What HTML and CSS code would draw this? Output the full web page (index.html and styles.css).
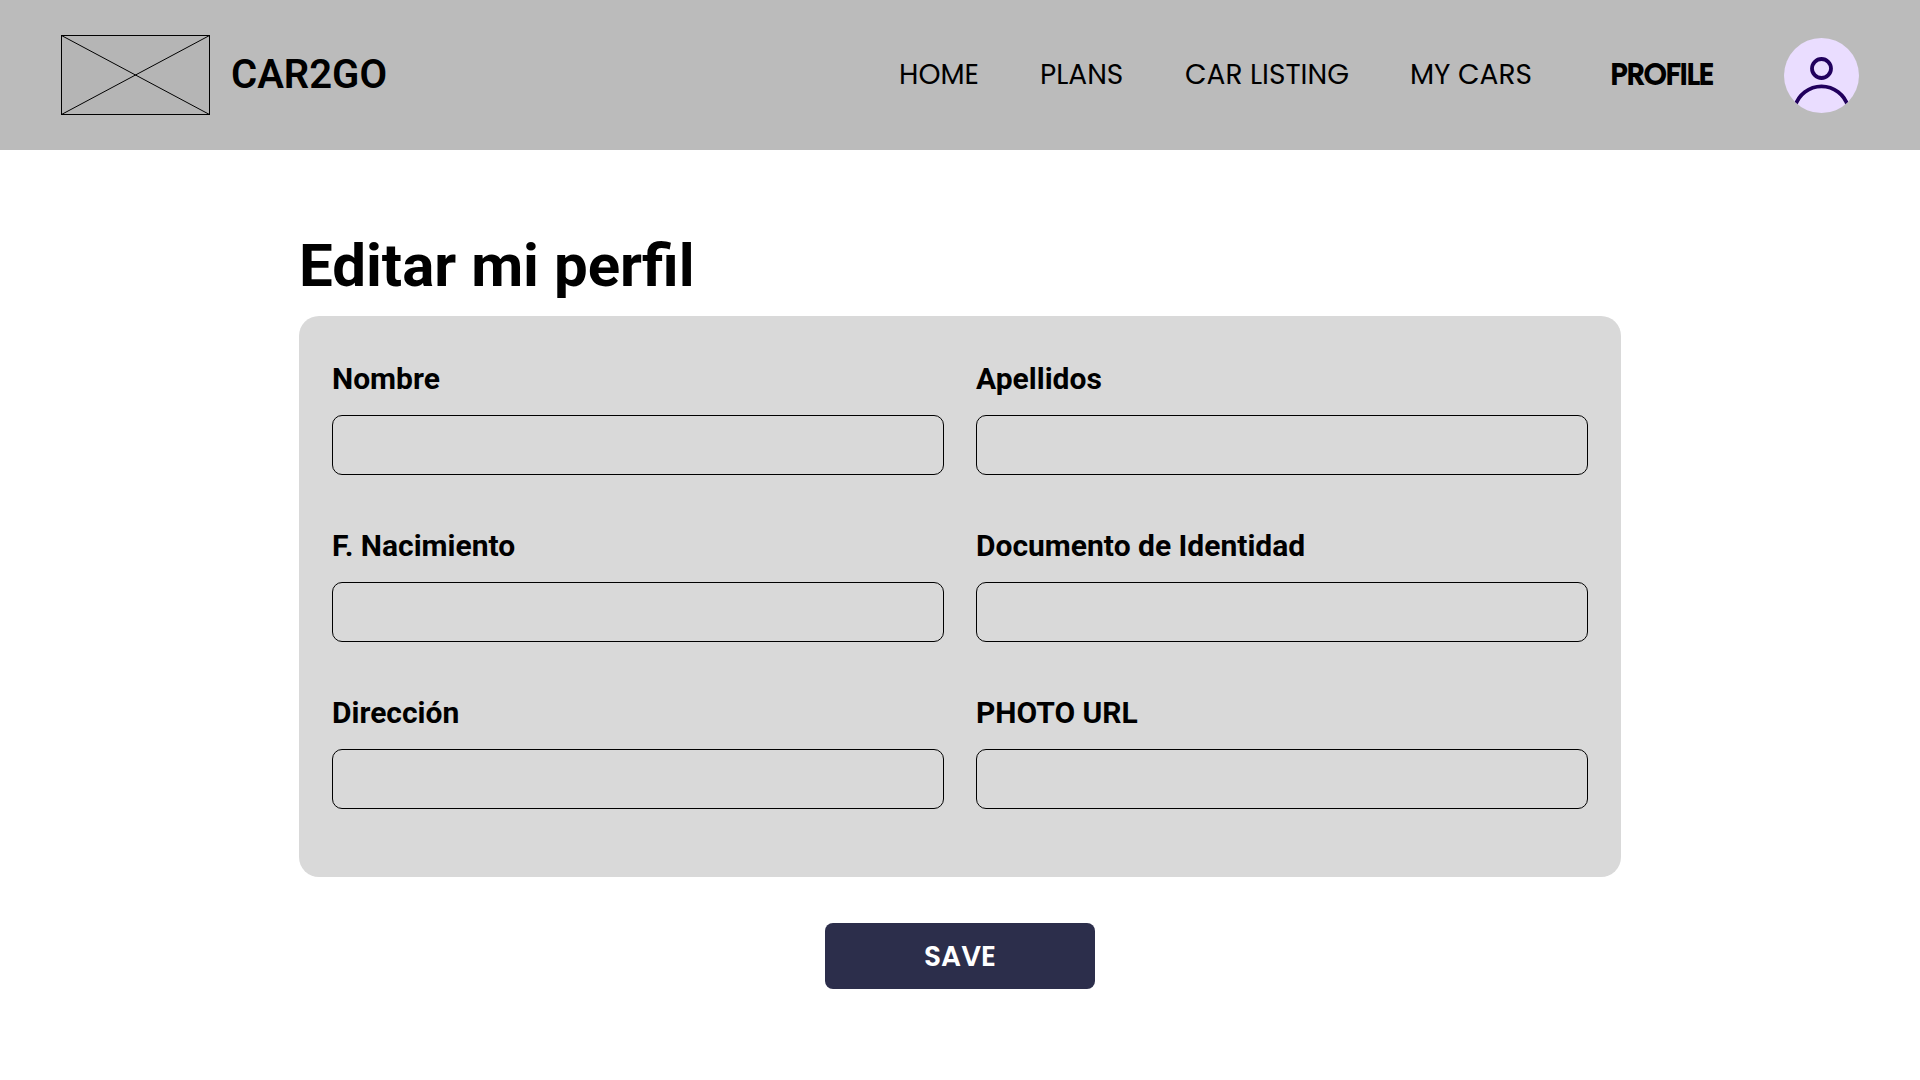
FILE: index.html
```html
<!DOCTYPE html>
<html lang="es">
<head>
  <meta charset="utf-8">
  <meta name="viewport" content="width=device-width, initial-scale=1">
  <title>CAR2GO - Editar mi perfil</title>
  <link rel="stylesheet" href="styles.css">
</head>
<body>
  <header class="site-header">
    <a class="brand" href="#">
      <svg class="brand-logo" viewBox="0 0 149 80" aria-hidden="true">
        <rect x="0.5" y="0.5" width="148" height="79" fill="#b5b5b5" stroke="#000"/>
        <path d="M0.5 0.5L148.500 79.500M148.500 0.5L0.5 79.500" stroke="#000" fill="none"/>
      </svg>
      <span class="brand-name">CAR2GO</span>
    </a>
    <nav class="site-nav">
      <a class="nav-link" href="#">HOME</a>
      <a class="nav-link" href="#">PLANS</a>
      <a class="nav-link" href="#">CAR LISTING</a>
      <a class="nav-link" href="#">MY CARS</a>
      <a class="nav-link nav-link-active" href="#" aria-current="page">PROFILE</a>
      <svg class="avatar" viewBox="0 0 75 75" role="img" aria-label="Avatar">
        <clipPath id="avatar-clip"><circle cx="37.5" cy="37.5" r="37.5"/></clipPath>
        <g clip-path="url(#avatar-clip)">
          <rect width="75" height="75" fill="#eaddff"/>
          <g fill="none" stroke="#21005d" stroke-width="3.8">
            <circle cx="37.5" cy="30.500" r="9.500"/>
            <path d="M11 68.500A27.500 27.500 0 0 1 64 68.500"/>
          </g>
        </g>
      </svg>
    </nav>
  </header>

  <main class="page">
    <h1 class="page-title">Editar mi perfil</h1>
    <form class="profile-form">
      <div class="card">
        <div class="field">
          <label for="nombre">Nombre</label>
          <input id="nombre" type="text">
        </div>
        <div class="field">
          <label for="apellidos">Apellidos</label>
          <input id="apellidos" type="text">
        </div>
        <div class="field">
          <label for="nacimiento">F. Nacimiento</label>
          <input id="nacimiento" type="text">
        </div>
        <div class="field">
          <label for="documento">Documento de Identidad</label>
          <input id="documento" type="text">
        </div>
        <div class="field">
          <label for="direccion">Dirección</label>
          <input id="direccion" type="text">
        </div>
        <div class="field">
          <label for="photo">PHOTO URL</label>
          <input id="photo" type="url">
        </div>
      </div>
      <button class="save-button" type="submit">SAVE</button>
    </form>
  </main>
</body>
</html>
```
FILE: styles.css
```css
* {
  box-sizing: border-box;
}

body {
  margin: 0;
  background: #fff;
  color: #000;
  font-family: Roboto, sans-serif;
}

.site-header {
  display: flex;
  align-items: center;
  justify-content: space-between;
  gap: 32px;
  min-height: 150px;
  padding: 0 61px;
  background: #bbb;
}

.brand {
  display: flex;
  align-items: center;
  gap: 21px;
  color: inherit;
  text-decoration: none;
}

.brand-logo {
  display: block;
  width: 149px;
  height: 80px;
}

.brand-name {
  font-size: 40px;
  line-height: 48px;
  font-weight: 600;
}

.site-nav {
  display: grid;
  grid-template-columns: 141px 145px 225px 201px 173px 75px;
  align-items: center;
}

.nav-link {
  color: inherit;
  font-family: Poppins, Lato, sans-serif;
  font-size: 28px;
  line-height: 36px;
  text-decoration: none;
}

.nav-link-active {
  -webkit-text-stroke: 2px #000;
}

.avatar {
  display: block;
  width: 75px;
  height: 75px;
}

.page {
  max-width: 1322px;
  margin: 0 auto;
  padding: 80px 0;
}

.page-title {
  margin: 0 0 14px;
  font-size: 60px;
  line-height: 72px;
  font-weight: 700;
}

.profile-form {
  display: flex;
  flex-direction: column;
  align-items: center;
  gap: 46px;
}

.card {
  display: grid;
  grid-template-columns: 1fr 1fr;
  gap: 53px 32px;
  width: 100%;
  padding: 45px 33px 68px;
  border-radius: 20px;
  background: #d9d9d9;
}

.field {
  display: flex;
  flex-direction: column;
  gap: 18px;
}

.field label {
  font-size: 30px;
  line-height: 36px;
  font-weight: 700;
}

.field input {
  width: 100%;
  height: 60px;
  padding: 0 16px;
  border: 1px solid #000;
  border-radius: 10px;
  background: transparent;
  color: inherit;
  font: inherit;
  font-size: 28px;
}

.save-button {
  width: 270px;
  height: 66px;
  padding: 2px 0 0;
  border: 0;
  border-radius: 8px;
  background: #2c2e4b;
  color: #fff;
  font-family: Poppins, Lato, sans-serif;
  font-size: 28px;
  line-height: 36px;
  font-weight: 600;
}
```
